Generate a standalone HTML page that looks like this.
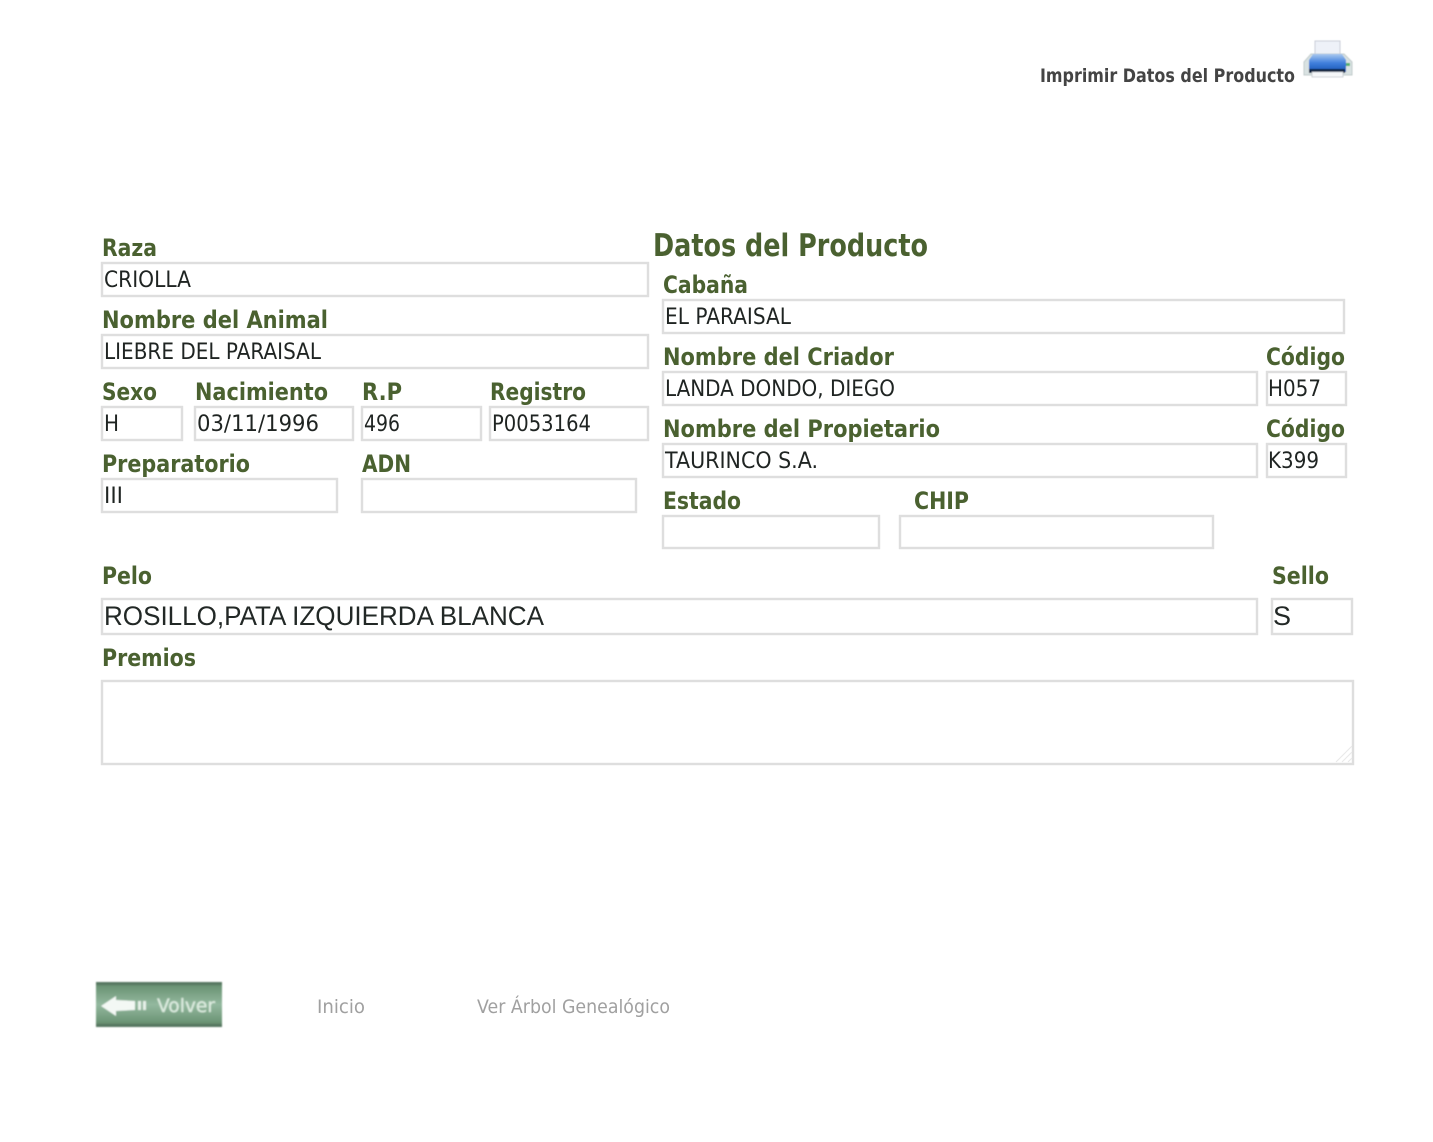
<!DOCTYPE html>
<html lang="es">
<head>
<meta charset="utf-8">
<title>Datos del Producto</title>
<style>
html,body{margin:0;padding:0;background:#fff;width:1433px;height:1142px;overflow:hidden}
svg{display:block}
text{font-family:"DejaVu Sans","Liberation Sans",sans-serif}
.l{font-weight:bold;font-size:24px;fill:#4a6130}
.v{font-size:22px;fill:#1f2422}
.a{font-family:"Liberation Sans",sans-serif;font-size:27px;fill:#222826}
.n{font-size:19px;fill:#a0a0a0}
rect.b{fill:#fff;stroke:#dedede;stroke-width:2.4}
</style>
</head>
<body>
<svg width="1433" height="1142" viewBox="0 0 1433 1142" xmlns="http://www.w3.org/2000/svg">
<defs>
<linearGradient id="g" x1="0" y1="0" x2="0" y2="1">
<stop offset="0" stop-color="#5f8568"/><stop offset=".14" stop-color="#6f9879"/><stop offset=".5" stop-color="#93b89e"/><stop offset=".86" stop-color="#6f9879"/><stop offset="1" stop-color="#5a7f62"/>
</linearGradient>
<linearGradient id="p" x1="0" y1="0" x2="0" y2="1">
<stop offset="0" stop-color="#a9c8f0"/><stop offset=".5" stop-color="#3f7fdc"/><stop offset="1" stop-color="#1a56b4"/>
</linearGradient>
<filter id="s" x="-5%" y="-10%" width="110%" height="120%"><feGaussianBlur stdDeviation="0.7"/></filter>
<filter id="s2" x="-5%" y="-5%" width="110%" height="110%"><feGaussianBlur stdDeviation="0.5"/></filter>
</defs>

<!-- print -->
<text x="1040" y="82" font-size="19" font-weight="bold" fill="#444" textLength="255" lengthAdjust="spacingAndGlyphs">Imprimir Datos del Producto</text>
<g filter="url(#s2)">
<rect x="1315" y="41" width="25" height="16" fill="#eef1f8" stroke="#c9ced8"/>
<path d="M1311 54h33l8 8v13h-48v-13z" fill="#d9e2e2" stroke="#c2cccc"/>
<path d="M1313 54h29l4 6v12h-37v-12z" fill="url(#p)"/>
<rect x="1309" y="69" width="36" height="4" fill="#0f2040"/>
<rect x="1312" y="72" width="31" height="5" fill="#f6f7f9" stroke="#c5cad0" stroke-width=".8"/>
<rect x="1346" y="63" width="4" height="3" fill="#55b070"/>
</g>

<!-- left column -->
<text class="l" x="102" y="256" textLength="55" lengthAdjust="spacingAndGlyphs">Raza</text>
<rect class="b" x="102" y="263" width="546" height="33"/>
<text class="v" x="104" y="287" textLength="87" lengthAdjust="spacingAndGlyphs">CRIOLLA</text>

<text class="l" x="102" y="328" textLength="226" lengthAdjust="spacingAndGlyphs">Nombre del Animal</text>
<rect class="b" x="102" y="335" width="546" height="33"/>
<text class="v" x="104" y="359" textLength="217" lengthAdjust="spacingAndGlyphs">LIEBRE DEL PARAISAL</text>

<text class="l" x="102" y="400" textLength="55" lengthAdjust="spacingAndGlyphs">Sexo</text>
<text class="l" x="195" y="400" textLength="133" lengthAdjust="spacingAndGlyphs">Nacimiento</text>
<text class="l" x="362" y="400" textLength="40" lengthAdjust="spacingAndGlyphs">R.P</text>
<text class="l" x="490" y="400" textLength="96" lengthAdjust="spacingAndGlyphs">Registro</text>
<rect class="b" x="102" y="407" width="80" height="33"/>
<rect class="b" x="195" y="407" width="158" height="33"/>
<rect class="b" x="362" y="407" width="119" height="33"/>
<rect class="b" x="490" y="407" width="158" height="33"/>
<text class="v" x="104" y="431" textLength="15" lengthAdjust="spacingAndGlyphs">H</text>
<text class="v" x="197" y="431" textLength="122" lengthAdjust="spacingAndGlyphs">03/11/1996</text>
<text class="v" x="364" y="431" textLength="36" lengthAdjust="spacingAndGlyphs">496</text>
<text class="v" x="492" y="431" textLength="99" lengthAdjust="spacingAndGlyphs">P0053164</text>

<text class="l" x="102" y="472" textLength="148" lengthAdjust="spacingAndGlyphs">Preparatorio</text>
<text class="l" x="362" y="472" textLength="49" lengthAdjust="spacingAndGlyphs">ADN</text>
<rect class="b" x="102" y="479" width="235" height="33"/>
<rect class="b" x="362" y="479" width="274" height="33"/>
<text class="v" x="104" y="503" textLength="19" lengthAdjust="spacingAndGlyphs">III</text>

<!-- right column -->
<text x="653" y="256" font-size="31" font-weight="bold" fill="#4a6130" textLength="275" lengthAdjust="spacingAndGlyphs">Datos del Producto</text>

<text class="l" x="663" y="293" textLength="85" lengthAdjust="spacingAndGlyphs">Cabaña</text>
<rect class="b" x="663" y="300" width="681" height="33"/>
<text class="v" x="665" y="324" textLength="126" lengthAdjust="spacingAndGlyphs">EL PARAISAL</text>

<text class="l" x="663" y="365" textLength="231" lengthAdjust="spacingAndGlyphs">Nombre del Criador</text>
<text class="l" x="1266" y="365" textLength="79" lengthAdjust="spacingAndGlyphs">Código</text>
<rect class="b" x="663" y="372" width="594" height="33"/>
<rect class="b" x="1267" y="372" width="79" height="33"/>
<text class="v" x="665" y="396" textLength="230" lengthAdjust="spacingAndGlyphs">LANDA DONDO, DIEGO</text>
<text class="v" x="1268" y="396" textLength="53" lengthAdjust="spacingAndGlyphs">H057</text>

<text class="l" x="663" y="437" textLength="277" lengthAdjust="spacingAndGlyphs">Nombre del Propietario</text>
<text class="l" x="1266" y="437" textLength="79" lengthAdjust="spacingAndGlyphs">Código</text>
<rect class="b" x="663" y="444" width="594" height="33"/>
<rect class="b" x="1267" y="444" width="79" height="33"/>
<text class="v" x="665" y="468" textLength="153" lengthAdjust="spacingAndGlyphs">TAURINCO S.A.</text>
<text class="v" x="1268" y="468" textLength="51" lengthAdjust="spacingAndGlyphs">K399</text>

<text class="l" x="663" y="509" textLength="78" lengthAdjust="spacingAndGlyphs">Estado</text>
<text class="l" x="914" y="509" textLength="55" lengthAdjust="spacingAndGlyphs">CHIP</text>
<rect class="b" x="663" y="516" width="216" height="32"/>
<rect class="b" x="900" y="516" width="313" height="32"/>

<!-- pelo -->
<text class="l" x="102" y="584" textLength="50" lengthAdjust="spacingAndGlyphs">Pelo</text>
<text class="l" x="1272" y="584" textLength="57" lengthAdjust="spacingAndGlyphs">Sello</text>
<rect class="b" x="102" y="599" width="1155" height="35"/>
<rect class="b" x="1272" y="599" width="80" height="35"/>
<text class="a" x="104" y="625" textLength="440" lengthAdjust="spacingAndGlyphs">ROSILLO,PATA IZQUIERDA BLANCA</text>
<text class="a" x="1273" y="625">S</text>

<!-- premios -->
<text class="l" x="102" y="666" textLength="94" lengthAdjust="spacingAndGlyphs">Premios</text>
<rect class="b" x="102" y="681" width="1251" height="83"/>
<path d="M1336 762l16-16M1342 762l10-10M1348 762l4-4" stroke="#e8e8e8" stroke-width="1" fill="none"/>

<!-- footer -->
<g filter="url(#s)">
<rect x="96" y="982" width="126" height="45" fill="url(#g)"/>
<rect x="96" y="982" width="126" height="3" fill="#567760"/>
<rect x="96" y="1024" width="126" height="3" fill="#567760"/>
<path d="M101 1006l15-10v4l19 1v9l-19 1v5z" fill="#f3f8f4"/>
<rect x="138" y="1001" width="3" height="9" fill="#e6f0e8"/>
<rect x="143" y="1001" width="3" height="9" fill="#e6f0e8"/>
<text x="157" y="1012" font-size="19" fill="#dcebdf" stroke="#dcebdf" stroke-width=".3" textLength="58" lengthAdjust="spacingAndGlyphs">Volver</text>
</g>

<text class="n" x="317" y="1013" textLength="48" lengthAdjust="spacingAndGlyphs">Inicio</text>
<text class="n" x="477" y="1013" textLength="193" lengthAdjust="spacingAndGlyphs">Ver Árbol Genealógico</text>
</svg>
</body>
</html>
